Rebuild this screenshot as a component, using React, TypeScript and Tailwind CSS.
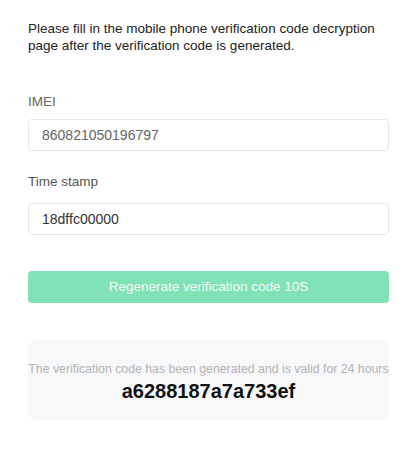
import React from "react";

export default function App() {
  return (
    <div className="w-[415px] h-[451px] bg-white pl-[28px] pr-[26px] pt-[20px] font-['Liberation_Sans',Arial,sans-serif]">
      <p className="text-[13.5px] leading-[17px] text-[#222222]">
        Please fill in the mobile phone verification code decryption page after the verification code is generated.
      </p>

      <div className="mt-[38px] text-[13.5px] leading-[20px] text-[#666666]">IMEI</div>
      <div className="mt-[7px] h-[32px] flex items-center rounded-[4px] border border-[#e6e6e6] pl-[13px] text-[14px] text-[#666666]">
        860821050196797
      </div>

      <div className="mt-[21px] text-[13.5px] leading-[20px] text-[#555555]">Time stamp</div>
      <div className="mt-[11px] h-[32px] flex items-center rounded-[4px] border border-[#e6e6e6] pl-[13px] text-[14px] text-[#333333]">
        18dffc00000
      </div>

      <button className="mt-[36px] w-full h-[32px] flex items-center justify-center rounded-[4px] bg-[#80e2b5] text-[13.5px] text-[#f4fcf8]">
        Regenerate verification code 10S
      </button>

      <div className="mt-[37px] h-[80px] rounded-[8px] bg-[#f7f8fa] flex flex-col items-center pt-[20px]">
        <div className="whitespace-nowrap text-[12.3px] leading-[18px] text-[#b3b3b3]">
          The verification code has been generated and is valid for 24 hours
        </div>
        <div className="mt-[1px] text-[20px] leading-[24px] font-bold text-[#111111]">a6288187a7a733ef</div>
      </div>
    </div>
  );
}
